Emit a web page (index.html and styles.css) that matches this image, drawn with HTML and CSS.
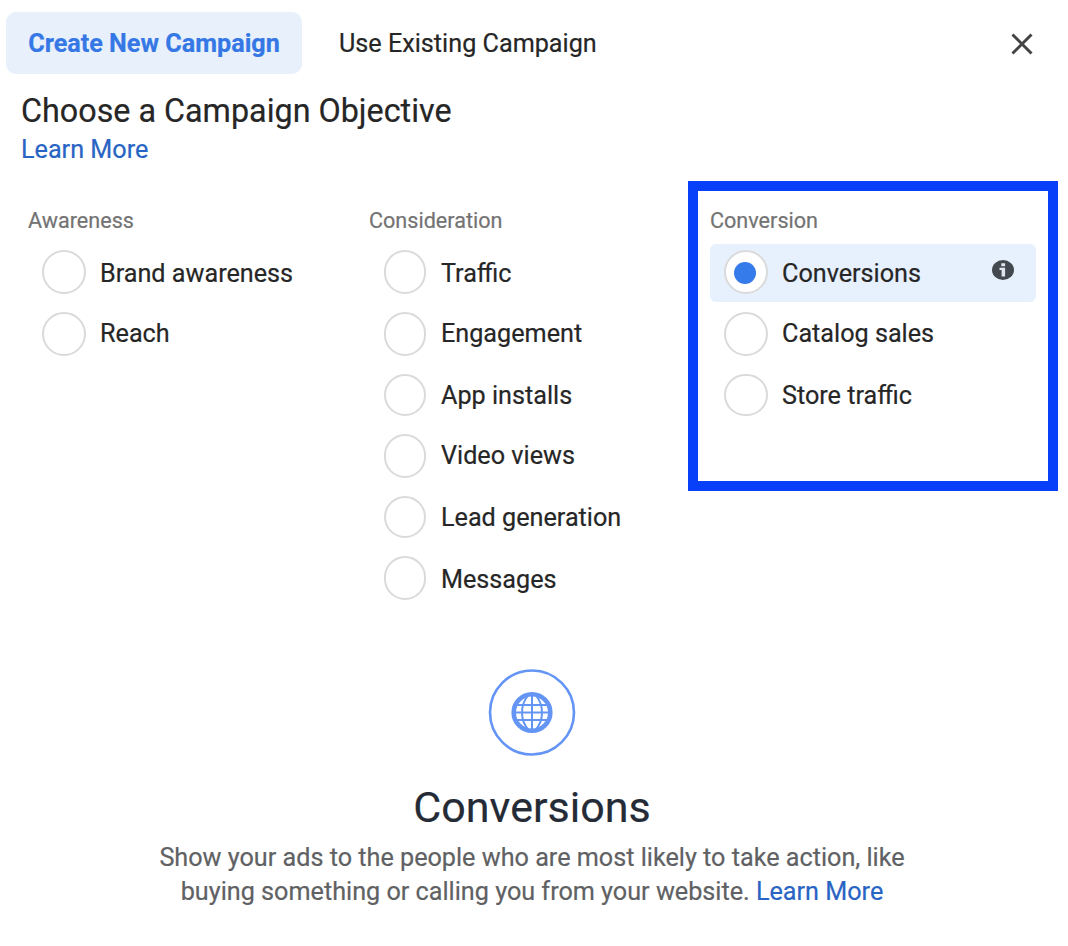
FILE: index.html
```html
<!DOCTYPE html>
<html lang="en">
<head>
  <meta charset="UTF-8">
  <meta name="viewport" content="width=device-width, initial-scale=1.0">
  <title>Create New Campaign</title>
  <link rel="stylesheet" href="styles.css">
</head>
<body>
  <div class="dialog">
    <!-- Tabs -->
    <div class="tabs">
      <button class="tab active">Create New Campaign</button>
      <button class="tab">Use Existing Campaign</button>
      <button class="close" aria-label="Close">
        <svg width="24" height="24" viewBox="0 0 24 24">
          <path d="M2.500 2.500L21.500 21.500M21.500 2.500L2.500 21.500"/>
        </svg>
      </button>
    </div>

    <div class="intro">
      <h1>Choose a Campaign Objective</h1>
      <a href="#" class="link">Learn More</a>
    </div>

    <!-- Objectives -->
    <div class="objectives">
      <div class="column">
        <h2>Awareness</h2>
        <ul>
          <li><span class="radio"></span><span class="label">Brand awareness</span></li>
          <li><span class="radio"></span><span class="label">Reach</span></li>
        </ul>
      </div>
      <div class="column narrow">
        <h2>Consideration</h2>
        <ul>
          <li><span class="radio"></span><span class="label">Traffic</span></li>
          <li><span class="radio"></span><span class="label">Engagement</span></li>
          <li><span class="radio"></span><span class="label">App installs</span></li>
          <li><span class="radio"></span><span class="label">Video views</span></li>
          <li><span class="radio"></span><span class="label">Lead generation</span></li>
          <li><span class="radio"></span><span class="label">Messages</span></li>
        </ul>
      </div>
      <div class="column framed">
        <h2>Conversion</h2>
        <ul>
          <li class="selected">
            <span class="radio"></span><span class="label">Conversions</span>
            <svg class="info" width="22" height="20" viewBox="0 0 22 20">
              <ellipse cx="11" cy="10" rx="11" ry="10" fill="#444950"/>
              <path d="M9.300 3.200h3.800v3H9.300zM7.500 7.800h5.600v8.600H9.600V10H7.500z" fill="#dfe6f0"/>
            </svg>
          </li>
          <li><span class="radio"></span><span class="label">Catalog sales</span></li>
          <li><span class="radio"></span><span class="label">Store traffic</span></li>
        </ul>
      </div>
    </div>

    <!-- Description of the selected objective -->
    <div class="details">
      <svg class="globe" width="88" height="88" viewBox="0 0 88 88">
        <circle cx="44" cy="43.500" r="42" stroke-width="2.600"/>
        <circle cx="44" cy="43.500" r="18.300" stroke-width="4.600"/>
        <path d="M44 26v36M27 43.500h34M29 36h30M29 51h30" stroke-width="2"/>
        <path d="M40 26.500C32 36.500 32 50.500 40 60.500M48 26.500C56 36.500 56 50.500 48 60.500" stroke-width="2"/>
      </svg>
      <h3>Conversions</h3>
      <p>Show your ads to the people who are most likely to take action, like<br>buying something or calling you from your website. <a href="#" class="link">Learn More</a></p>
    </div>
  </div>
</body>
</html>
```
FILE: styles.css
```css
*,
*::after {
  box-sizing: border-box;
}
body {
  margin: 0;
  background-color: #fff;
  font-family: Roboto, sans-serif;
  color: #262626;
  -webkit-text-stroke: 0.2px;
}
h1, h2, h3, p, ul {
  margin: 0;
  padding: 0;
  font-weight: 400;
}
.dialog {
  width: 1068px;
  height: 946px;
  padding-top: 12px;
  overflow: hidden;
}
.tabs {
  display: flex;
  align-items: center;
  height: 62px;
  padding: 0 34px 0 6px;
}
.tab {
  height: 62px;
  padding: 0 22px;
  border: none;
  border-radius: 10px;
  background: none;
  font-family: inherit;
  font-size: 25.2px;
  color: #262626;
  white-space: nowrap;
}
.tab.active {
  width: 296px;
  margin-right: 15px;
  background-color: #e8f0fc;
  color: #3578e5;
  font-weight: 700;
}
.close {
  display: flex;
  margin-top: 2px;
  margin-left: auto;
  padding: 0;
  border: none;
  background: none;
}
.close path {
  stroke: #444;
  stroke-width: 3;
}
.intro {
  padding: 16px 21px 0;
}
.intro h1 {
  font-size: 32.3px;
  line-height: 42px;
}
.intro .link {
  display: block;
  margin-top: 1px;
  font-size: 25.2px;
  line-height: 34px;
}
.link {
  color: #2864c4;
  text-decoration: none;
}
.objectives {
  display: grid;
  grid-template-columns: repeat(3, 326px);
  gap: 15px;
  height: 446px;
  padding: 39px 28px 0;
}
.column {
  position: relative;
}
.column h2 {
  font-size: 21.6px;
  line-height: 30px;
  color: #737373;
}
.column ul {
  display: grid;
  grid-template-rows: 60px 62px 60px 62px 62px 58px;
  align-items: start;
  padding-top: 8px;
  list-style: none;
}
.column li {
  display: flex;
  height: 58px;
  padding-left: 14px;
  border-radius: 6px;
}
.radio {
  width: 44px;
  height: 44px;
  margin: 8px 14px 0 0;
  border: 2px solid #dadada;
  border-radius: 22px;
  background-color: #fff;
}
li:first-child .radio,
li:nth-child(6) .radio {
  margin-top: 6px;
}
li:nth-child(3) .radio,
li:nth-child(5) .radio {
  height: 42px;
}
.narrow .radio {
  width: 42px;
  margin-left: 1px;
  margin-right: 15px;
}
.label {
  font-size: 25.2px;
  line-height: 60px;
}
.column .selected {
  background-color: #e7f1fe;
}
.selected .radio {
  display: flex;
  align-items: center;
  justify-content: center;
}
.selected .radio::after {
  content: "";
  width: 22px;
  height: 22px;
  margin: 2px 2px 0 0;
  border-radius: 50%;
  background-color: #357bea;
}
.info {
  margin: 16px 22px 0 auto;
}
/* Highlight around the conversion column */
.framed::after {
  content: "";
  position: absolute;
  top: -25px;
  left: -22px;
  width: 370px;
  height: 310px;
  border: 10px solid #0740f8;
}
.details {
  padding-top: 56px;
  padding-right: 4px;
  text-align: center;
}
.globe {
  display: block;
  margin: 0 auto;
  fill: none;
  stroke: #6495f5;
}
.details h3 {
  margin-top: 21px;
  font-size: 43px;
  line-height: 58px;
  color: #242b36;
}
.details p {
  margin-top: 5px;
  font-size: 25.2px;
  line-height: 34px;
  color: #606163;
}
```
